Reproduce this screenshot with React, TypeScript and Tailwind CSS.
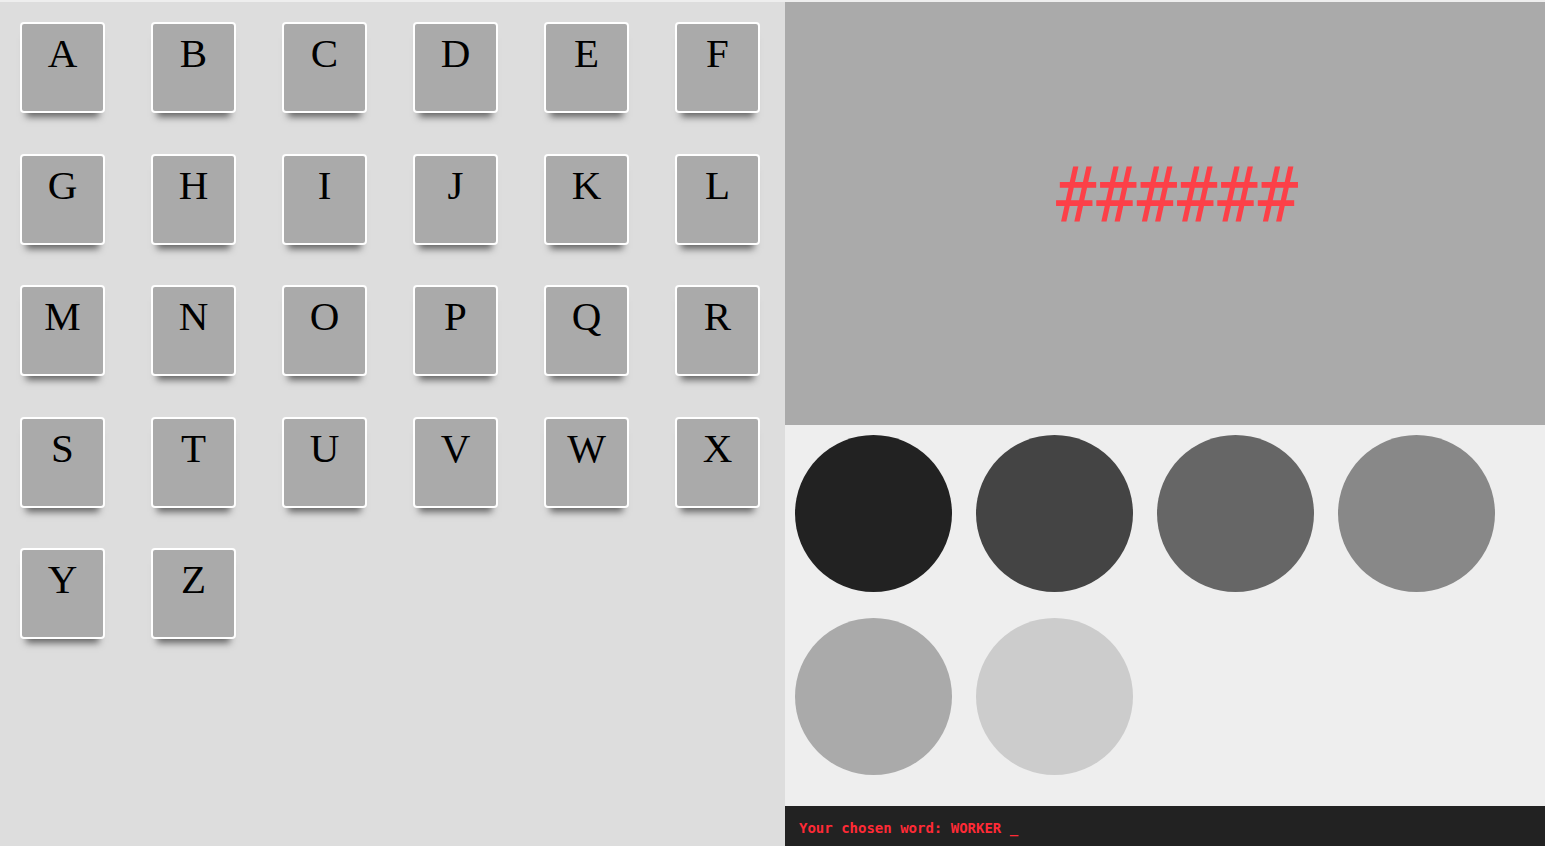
import React from 'react';

const letters = 'ABCDEFGHIJKLMNOPQRSTUVWXYZ'.split('');
const circles = ['#222222', '#444444', '#666666', '#888888', '#aaaaaa', '#cccccc'];

const App: React.FC = () => {
  return (
    <div className="w-[1545px] h-[846px] bg-[#eeeeee] pt-[2px] flex overflow-hidden">
      {/* letter board */}
      <div className="w-[785px] h-full bg-[#dddddd] pl-[20px] pt-[20px]">
        <div className="grid grid-cols-[repeat(6,85px)] gap-x-[46px] gap-y-[40.5px]">
          {letters.map((l) => (
            <div
              key={l}
              className="h-[91px] bg-[#aaaaaa] border-2 border-white rounded-[4px] shadow-[0_10px_7px_-6px_rgba(0,0,0,0.55)] flex justify-center pt-[5px] text-[41px] leading-[48px] text-black"
              style={{ fontFamily: '"Liberation Serif", "Times New Roman", serif' }}
            >
              {l}
            </div>
          ))}
        </div>
      </div>

      {/* right side */}
      <div className="w-[760px] h-full flex flex-col">
        <div className="h-[423px] bg-[#aaaaaa] flex justify-center pt-[152px]">
          <span
            className="text-[67px] leading-[84px] text-[#fc4048] pl-[24px] scale-y-[1.13] h-[84px]"
            style={{ fontFamily: '"DejaVu Sans Mono", "Liberation Mono", monospace' }}
          >
            ######
          </span>
        </div>
        <div className="flex-1 bg-[#eeeeee] pl-[10px] pt-[10px]">
          <div className="grid grid-cols-[repeat(4,157px)] gap-x-[24px] gap-y-[26px]">
            {circles.map((c) => (
              <div key={c} className="w-[157px] h-[157px] rounded-full" style={{ backgroundColor: c }} />
            ))}
          </div>
        </div>
        <div
          className="h-[40px] bg-[#222222] px-[14px] pt-[4px] flex items-center text-[14px] font-bold text-[#ff2a36]"
          style={{ fontFamily: '"DejaVu Sans Mono", "Liberation Mono", monospace' }}
        >
          Your chosen word: WORKER _
        </div>
      </div>
    </div>
  );
};

export default App;
